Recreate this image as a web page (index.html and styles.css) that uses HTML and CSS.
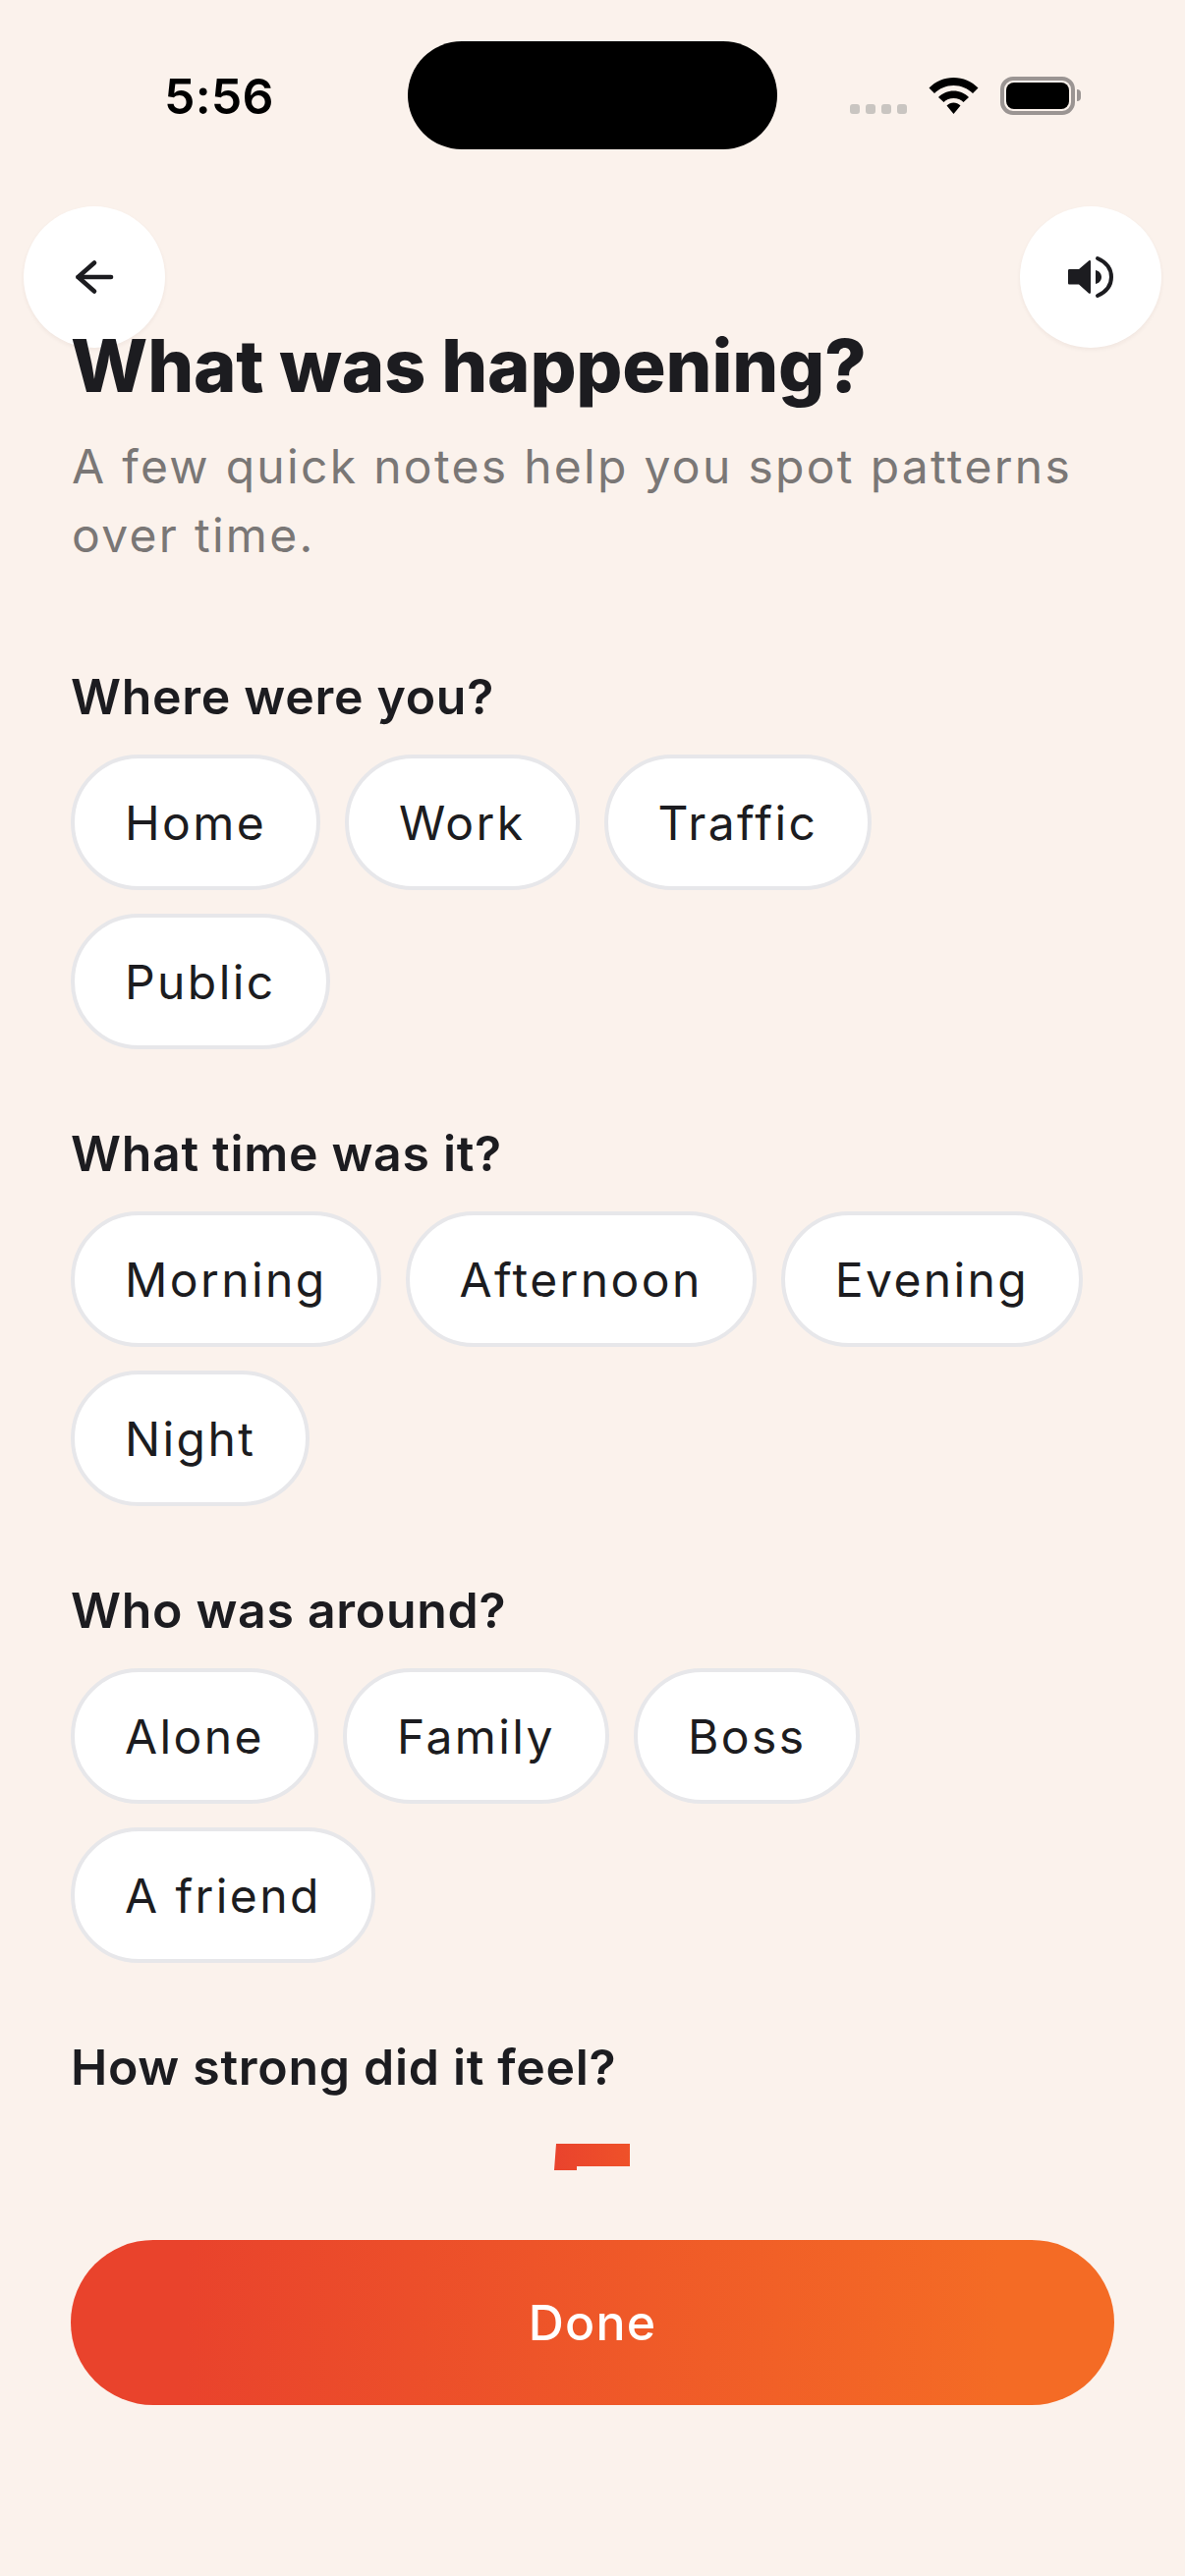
FILE: index.html
```html
<!DOCTYPE html>
<html lang="en">
<head>
<meta charset="utf-8">
<title>What was happening?</title>
<link rel="stylesheet" href="styles.css">
</head>
<body>
<main class="screen">
  <div class="status">
    <span class="time">5:56</span>
    <div class="island"></div>
    <div class="status-icons">
      <div class="dots"><i></i><i></i><i></i><i></i></div>
      <svg class="wifi" width="51" height="38" viewBox="0 0 51 38"><path d="M25.5 1C35 1 44 5 50.5 11.500L45 17C40 12 33 9 25.500 9S11 12 6 17L0.500 11.500C7 5 16 1 25.500 1Z"/><path d="M25.500 14.500C31.500 14.500 37 17 41 21L35.500 26C33 23.500 29.500 22 25.500 22S18 23.500 15.500 26L10 21C14 17 19.500 14.500 25.500 14.500Z"/><path d="M25.500 26.500C28 26.500 30.500 27.500 32.500 29.500L25.500 38L18.500 29.500C20.500 27.500 23 26.500 25.500 26.500Z"/></svg>
      <div class="battery"><div class="battery-fill"></div></div>
      <div class="battery-tip"></div>
    </div>
  </div>

  <div class="nav">
    <button class="round" aria-label="Back">
      <svg width="44" height="44" viewBox="0 0 44 44" fill="none" stroke="#1c1c20" stroke-width="4.600" stroke-linecap="round" stroke-linejoin="round"><path d="M39 22H5.500"/><path d="M22 7.500L5.500 22L22 36.500"/></svg>
    </button>
    <button class="round" aria-label="Sound">
      <svg width="48" height="44" viewBox="0 0 48 44"><path fill="#1c1c20" d="M2.500 14H12L22 5.500C23 4.700 24 5.200 24 6.500V37.500C24 38.800 23 39.300 22 38.500L12 29.500H2.500C1.500 29.500 1 29 1 28V15.500C1 14.500 1.500 14 2.500 14Z"/><path fill="#1c1c20" d="M29 15C33 16 35 19 35 22S33 28 29 29Z"/><path fill="none" stroke="#1c1c20" stroke-width="4" stroke-linecap="round" d="M31 3C40 7 45 14 45 22S40 37 31 41"/></svg>
    </button>
  </div>

  <div class="content">
    <h1 class="title">What was happening?</h1>
    <p class="sub">A few quick notes help you spot patterns over time.</p>

    <section class="group">
      <h2 class="label">Where were you?</h2>
      <div class="chips"><span class="chip">Home</span><span class="chip">Work</span><span class="chip">Traffic</span><span class="chip">Public</span></div>
    </section>
    <section class="group">
      <h2 class="label">What time was it?</h2>
      <div class="chips"><span class="chip">Morning</span><span class="chip">Afternoon</span><span class="chip">Evening</span><span class="chip">Night</span></div>
    </section>
    <section class="group">
      <h2 class="label">Who was around?</h2>
      <div class="chips"><span class="chip">Alone</span><span class="chip">Family</span><span class="chip">Boss</span><span class="chip">A friend</span></div>
    </section>
    <section class="group">
      <h2 class="label">How strong did it feel?</h2>
      <div class="sliver-row">
        <svg class="sliver" width="77" height="27" viewBox="0 0 77 27"><defs><linearGradient id="sl" x1="0" x2="1"><stop offset="0" stop-color="#e9432d"/><stop offset="1" stop-color="#ef5129"/></linearGradient></defs><path fill="url(#sl)" d="M2 0H77V23H23V27H0Z"/></svg>
      </div>
    </section>
  </div>

  <button class="done">Done</button>
</main>
</body>
</html>
```

FILE: styles.css
```css
* { box-sizing: border-box; }
html, body { margin: 0; padding: 0; }
body { background: #fbf2ec; font-family: "Inter", "Liberation Sans", sans-serif; color: #1c1c20; }
.screen { width: 1206px; height: 2622px; position: relative; overflow: hidden; background: #fbf2ec; }

.status { height: 210px; padding-top: 42px; display: flex; align-items: flex-start; position: relative; }
.time { width: 415px; padding-left: 167px; padding-top: 28px; font-size: 50px; line-height: 56px; font-weight: 600; color: #000; letter-spacing: 0.2px; }
.island { width: 376px; height: 110px; border-radius: 55px; background: #000; }
.status-icons { display: flex; align-items: flex-start; margin-left: 74px; padding-top: 36px; }
.dots { display: flex; gap: 6px; margin-top: 28px; margin-right: 22px; }
.dots i { display: block; width: 10px; height: 10px; border-radius: 3px; background: #c9c5c1; }
.wifi { fill: #000; margin-right: 22px; }
.battery { width: 76px; height: 39px; border: 4px solid #9b9593; border-radius: 13px; padding: 2px; background: transparent; }
.battery-fill { width: 100%; height: 100%; background: #000; border-radius: 8px; }
.battery-tip { width: 4px; height: 12px; margin: 13px 0 0 2px; background: #9b9593; border-radius: 0 4px 4px 0; }

.nav { position: absolute; top: 210px; left: 24px; right: 24px; display: flex; justify-content: space-between; }
.round { width: 144px; height: 144px; padding: 0; border: 0; border-radius: 50%; background: #fff; box-shadow: 0 2px 4px rgba(60, 40, 30, 0.06); display: flex; align-items: center; justify-content: center; }

.content { position: relative; padding: 116px 72px 0; }
.title { margin: 0; font-size: 74px; line-height: 92px; font-weight: 800; letter-spacing: -0.2px; color: #1c1c20; }
.sub { margin: 22px 0 0; font-size: 48px; line-height: 70px; font-weight: 400; color: #7a7776; letter-spacing: 2.3px; padding-left: 1px; }

.sub + .group { margin-top: 98px; }
.group + .group { margin-top: 75px; }
.label { margin: 0 0 28px; font-size: 50px; line-height: 62px; font-weight: 600; color: #1c1c20; letter-spacing: 0.7px; }
.chips { display: flex; flex-wrap: wrap; gap: 24px 25px; }
.chip { height: 138px; padding: 0 51px; display: flex; align-items: center; background: #fff; border: 4px solid #e7e7ea; border-radius: 69px; font-size: 48px; font-weight: 400; color: #1c1c20; letter-spacing: 2.4px; }

.sliver-row { display: flex; justify-content: flex-start; padding-left: 492px; padding-top: 19px; }
.sliver { display: block; }

.done { position: absolute; left: 72px; top: 2280px; width: 1062px; height: 168px; border: 0; border-radius: 84px; background: linear-gradient(90deg, #e9432c 11%, #f46b25 89%); color: #fff; font-family: inherit; font-size: 50px; font-weight: 500; letter-spacing: 1.2px; }
```
